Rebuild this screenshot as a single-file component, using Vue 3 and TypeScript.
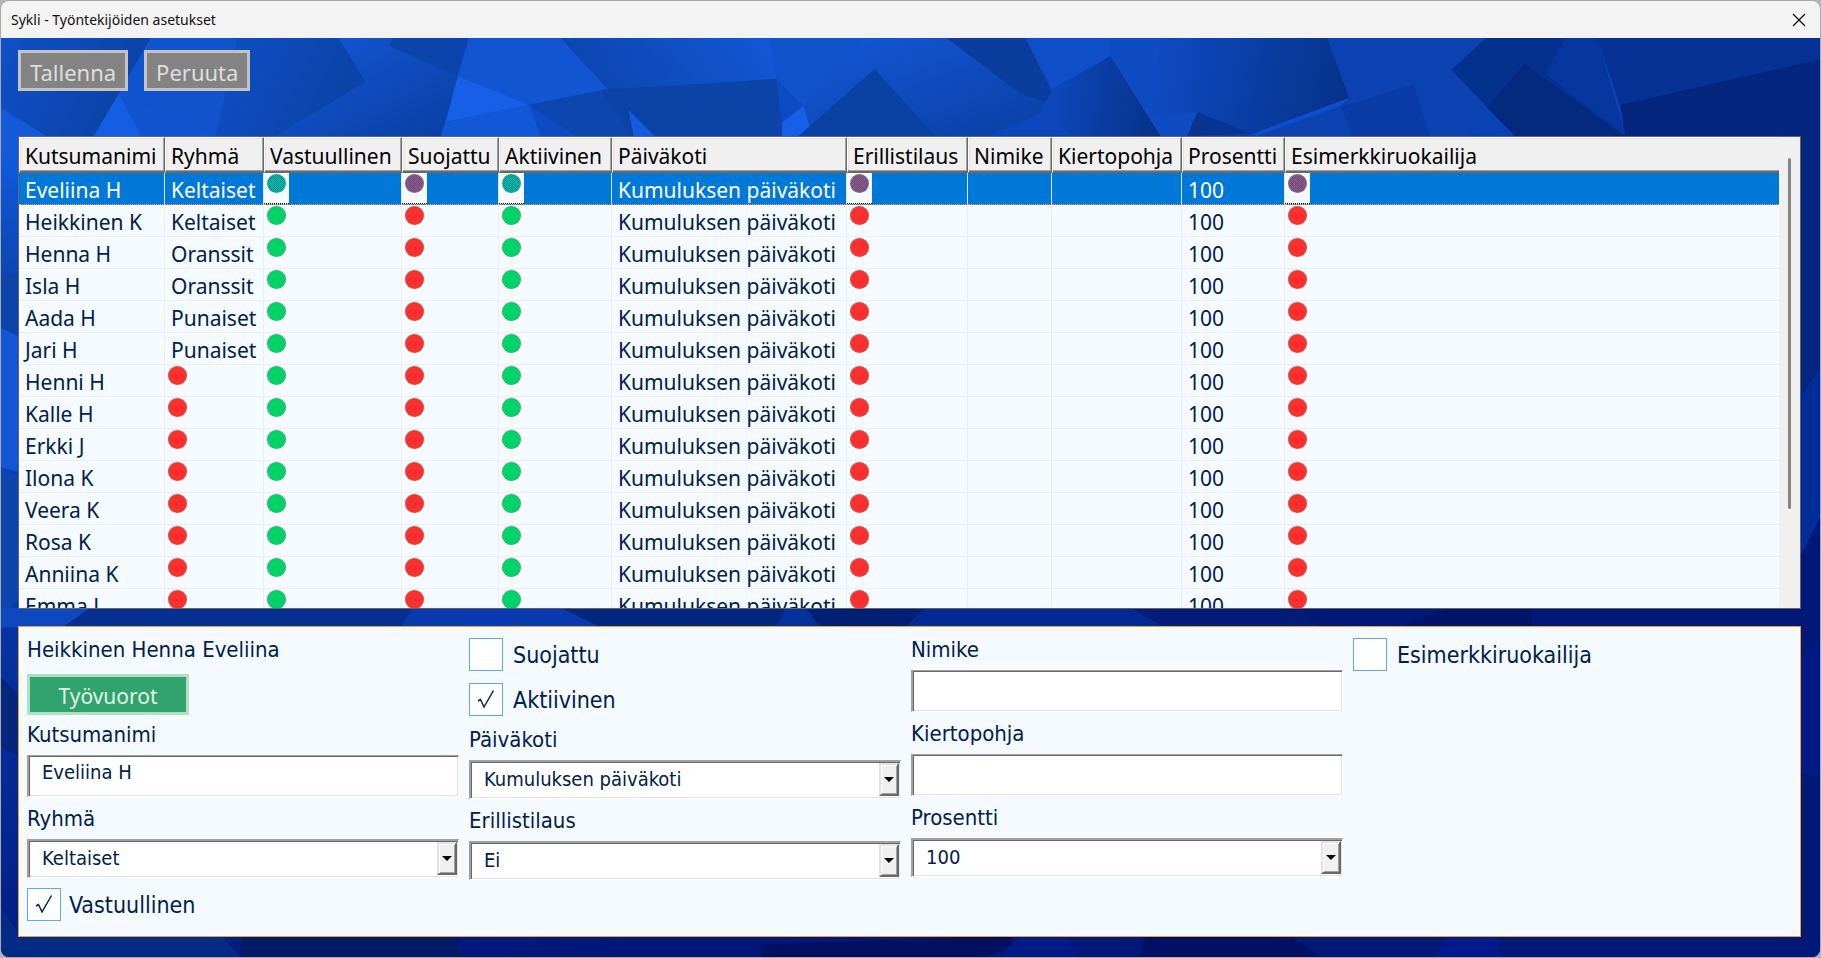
<script setup lang="ts">
import { reactive, ref } from 'vue'

interface Employee {
  name: string
  group: string | null
}

interface Column {
  key: string
  label: string
  width?: number
}

interface Facet {
  points: string
  fill: string
}

const columns: Column[] = [
  { key: 'name', label: 'Kutsumanimi', width: 146 },
  { key: 'group', label: 'Ryhmä', width: 99 },
  { key: 'responsible', label: 'Vastuullinen', width: 138 },
  { key: 'protected', label: 'Suojattu', width: 97 },
  { key: 'active', label: 'Aktiivinen', width: 113 },
  { key: 'daycare', label: 'Päiväkoti', width: 235 },
  { key: 'separate', label: 'Erillistilaus', width: 121 },
  { key: 'title', label: 'Nimike', width: 84 },
  { key: 'rotation', label: 'Kiertopohja', width: 130 },
  { key: 'percent', label: 'Prosentti', width: 103 },
  { key: 'sample', label: 'Esimerkkiruokailija' },
]

const employees: Employee[] = [
  { name: 'Eveliina H', group: 'Keltaiset' },
  { name: 'Heikkinen K', group: 'Keltaiset' },
  { name: 'Henna H', group: 'Oranssit' },
  { name: 'Isla H', group: 'Oranssit' },
  { name: 'Aada H', group: 'Punaiset' },
  { name: 'Jari H', group: 'Punaiset' },
  { name: 'Henni H', group: null },
  { name: 'Kalle H', group: null },
  { name: 'Erkki J', group: null },
  { name: 'Ilona K', group: null },
  { name: 'Veera K', group: null },
  { name: 'Rosa K', group: null },
  { name: 'Anniina K', group: null },
  { name: 'Emma L', group: null },
]

const selected = ref(0)

const form = reactive({
  nickname: 'Eveliina H',
  group: 'Keltaiset',
  responsible: true,
  protected: false,
  active: true,
  daycare: 'Kumuluksen päiväkoti',
  separate: 'Ei',
  title: '',
  rotation: '',
  percent: '100',
  sample: false,
})

function dotColor(key: string, e: Employee): string | null {
  if (key === 'group') return e.group ? null : 'red'
  if (key === 'responsible' || key === 'active') return 'green'
  if (key === 'protected' || key === 'separate' || key === 'sample') return 'red'
  return null
}

function cellText(key: string, e: Employee): string {
  if (key === 'name') return e.name
  if (key === 'group') return e.group ?? ''
  if (key === 'daycare') return 'Kumuluksen päiväkoti'
  if (key === 'percent') return '100'
  return ''
}

/* Facets of the blue backdrop, in a 1820 x 920 space that starts below the title bar */
const facets: Facet[] = [
  { points: '0,0 150,0 93,98 45,98 0,70', fill: 'url(#g-deep)' },
  { points: '0,70 45,98 60,120 0,120', fill: '#145ad8' },
  { points: '150,0 270,0 218,98 93,98', fill: '#1154d0' },
  { points: '118,56 140,98 93,98', fill: '#155de2' },
  { points: '150,50 222,30 216,98 218,98 130,60', fill: '#1153cc' },
  { points: '236,0 338,0 365,44 275,98 215,98', fill: 'url(#g-deep)' },
  { points: '338,0 390,0 388,8 458,38 440,98 275,98 365,44', fill: 'url(#g-fall)' },
  { points: '392,0 468,0 457,38 388,8', fill: '#0b44aa' },
  { points: '468,0 560,0 607,51 526,67 457,38', fill: '#1155d2' },
  { points: '457,38 528,67 445,84', fill: '#165fe6' },
  { points: '445,84 528,67 540,98 440,98', fill: '#1257d8' },
  { points: '528,67 607,51 632,98 575,98', fill: '#0c46ae' },
  { points: '560,0 770,0 776,41 608,52', fill: 'url(#g-rise)' },
  { points: '600,52 776,41 782,98 632,98', fill: '#0b43a6' },
  { points: '628,72 654,98 633,98', fill: '#155be0' },
  { points: '770,0 863,0 863,12 803,68 776,41', fill: '#1053cc' },
  { points: '863,0 946,0 1050,52 1058,67 990,98 935,98 874,31 812,98 803,68', fill: 'url(#g-fall)' },
  { points: '782,84 803,68 812,98 781,98', fill: '#165fe6' },
  { points: '874,31 935,98 798,98', fill: '#0b41a2' },
  { points: '946,0 1025,0 1058,67 1020,56', fill: '#0a3d9e' },
  { points: '1026,0 1110,0 1110,18 1052,51', fill: '#0f50ca' },
  { points: '1110,0 1200,0 1200,76 1187,98 1160,98 1110,18', fill: '#0f4cc4' },
  { points: '1052,51 1110,18 1160,98 1070,98 1040,75', fill: 'url(#g-night)' },
  { points: '1160,0 1327,0 1349,60 1252,96 1197,74 1150,78', fill: 'url(#g-night)' },
  { points: '1197,74 1252,96 1187,98', fill: '#083492' },
  { points: '1327,0 1486,0 1451,32 1487,70 1467,98 1252,98 1349,60', fill: '#0c42b2' },
  { points: '1341,69 1413,46 1430,98 1352,98', fill: '#0b3ba6' },
  { points: '1252,96 1349,60 1340,68 1256,98', fill: '#104fcc' },
  { points: '1486,0 1597,0 1625,98 1515,98 1451,32', fill: '#05318e' },
  { points: '1565,0 1597,0 1625,98 1545,36', fill: '#07369e' },
  { points: '1524,26 1625,98 1515,98 1487,70', fill: '#042a80' },
  { points: '1597,0 1820,0 1820,21 1620,68', fill: '#063296' },
  { points: '1820,21 1620,67 1625,98 1820,98', fill: '#04267e' },
  { points: '0,120 20,120 20,230 0,240', fill: 'url(#g-down)' },
  { points: '0,240 20,232 20,300 0,290', fill: '#0c44aa' },
  { points: '0,290 20,300 20,435 0,430', fill: '#1256d6' },
  { points: '0,430 20,440 20,560 0,580', fill: '#0c45ae' },
  { points: '0,570 90,570 62,590 0,590', fill: '#0d48be' },
  { points: '90,570 412,570 400,590 62,590', fill: '#06308f' },
  { points: '412,570 560,570 600,590 400,590', fill: '#0a3ab0' },
  { points: '560,570 785,570 775,590 600,590', fill: '#03267e' },
  { points: '785,570 805,570 820,590 775,590', fill: '#03319c' },
  { points: '805,570 925,570 905,590 820,590', fill: '#021f76' },
  { points: '925,570 1130,570 1165,590 905,590', fill: '#022a92' },
  { points: '1130,570 1300,570 1320,590 1165,590', fill: '#021c78' },
  { points: '1450,570 1530,570 1532,590 1400,590', fill: '#021468' },
  { points: '0,640 20,660 20,720 0,710', fill: '#04277c' },
  { points: '1800,98 1820,98 1820,330 1800,360', fill: '#04267e' },
  { points: '1800,360 1820,330 1820,480 1800,520', fill: '#022c98' },
  { points: '1800,620 1820,600 1820,740 1800,735', fill: '#001a86' },
  { points: '0,870 20,900 220,898 240,920 0,920', fill: '#032a84' },
  { points: '240,898 455,898 460,920 240,920', fill: '#011a68' },
  { points: '760,908 1010,898 1018,910 980,920 762,920', fill: '#001060' },
  { points: '1018,898 1065,898 1080,920 1000,920', fill: '#001a86' },
  { points: '1145,898 1290,898 1320,920 1140,920', fill: '#001062' },
  { points: '1447,898 1498,898 1500,920 1435,920', fill: '#001a8c' },
]
</script>

<template>
  <div class="window">
    <header class="titlebar">
      <h1 class="title">Sykli - Työntekijöiden asetukset</h1>
      <button class="close" type="button" aria-label="Sulje">
        <svg viewBox="0 0 14 14" width="14" height="14" aria-hidden="true">
          <path d="M1 1 L13 13 M13 1 L1 13" fill="none" stroke="#111" stroke-width="1.3" />
        </svg>
      </button>
    </header>

    <main class="body">
      <svg class="backdrop" viewBox="0 0 1820 920" preserveAspectRatio="none" aria-hidden="true">
        <defs>
          <linearGradient id="g-base" x1="0" y1="0" x2="0.35" y2="1">
            <stop offset="0" stop-color="#1156d6" />
            <stop offset="0.55" stop-color="#0636a4" />
            <stop offset="1" stop-color="#001678" />
          </linearGradient>
          <linearGradient id="g-deep" x1="0" y1="0" x2="1" y2="0.3">
            <stop offset="0" stop-color="#0f4fc6" />
            <stop offset="1" stop-color="#0b43a6" />
          </linearGradient>
          <linearGradient id="g-rise" x1="0" y1="0.4" x2="1" y2="0.2">
            <stop offset="0" stop-color="#0c45ae" />
            <stop offset="1" stop-color="#1257d6" />
          </linearGradient>
          <linearGradient id="g-fall" x1="0" y1="0" x2="1" y2="1">
            <stop offset="0" stop-color="#1358d8" />
            <stop offset="1" stop-color="#0a3fa2" />
          </linearGradient>
          <linearGradient id="g-night" x1="0" y1="0" x2="1" y2="0.1">
            <stop offset="0" stop-color="#0e4bc4" />
            <stop offset="1" stop-color="#07338c" />
          </linearGradient>
          <linearGradient id="g-down" x1="0" y1="0" x2="0" y2="1">
            <stop offset="0" stop-color="#1259de" />
            <stop offset="1" stop-color="#0b45b0" />
          </linearGradient>
        </defs>
        <rect width="1820" height="920" fill="url(#g-base)" />
        <rect x="1000" y="98" width="820" height="822" fill="#001878" />
        <polygon v-for="(f, i) in facets" :key="i" :points="f.points" :fill="f.fill" />
      </svg>

      <div class="toolbar">
        <button class="tool" type="button">Tallenna</button>
        <button class="tool" type="button">Peruuta</button>
      </div>

      <section class="list">
        <div class="scroller">
          <table class="grid">
            <colgroup>
              <col v-for="c in columns" :key="c.key" :style="c.width ? { width: c.width + 'px' } : {}" />
            </colgroup>
            <thead>
              <tr>
                <th v-for="c in columns" :key="c.key" scope="col">{{ c.label }}</th>
              </tr>
            </thead>
            <tbody>
              <tr
                v-for="(e, i) in employees"
                :key="e.name"
                :class="{ selected: i === selected }"
                @click="selected = i"
              >
                <td v-for="c in columns" :key="c.key" :class="{ mark: dotColor(c.key, e) }">
                  <span v-if="dotColor(c.key, e)" class="dot-box">
                    <span class="dot" :class="dotColor(c.key, e)"></span>
                  </span>
                  <template v-else>{{ cellText(c.key, e) }}</template>
                </td>
              </tr>
            </tbody>
          </table>
        </div>
        <div class="track"><div class="thumb"></div></div>
      </section>

      <form class="panel" @submit.prevent>
        <div class="column">
          <p class="fullname">Heikkinen Henna Eveliina</p>
          <button class="shifts" type="button">Työvuorot</button>
          <div class="field">
            <label for="nickname">Kutsumanimi</label>
            <input id="nickname" v-model="form.nickname" class="text" type="text" />
          </div>
          <div class="field">
            <label for="group">Ryhmä</label>
            <div class="combo">
              <select id="group" v-model="form.group">
                <option>Keltaiset</option>
                <option>Oranssit</option>
                <option>Punaiset</option>
              </select>
              <span class="arrow"></span>
            </div>
          </div>
          <label class="check tight">
            <span class="tick-box">
              <input v-model="form.responsible" type="checkbox" />
              <svg v-if="form.responsible" viewBox="0 0 34 33" aria-hidden="true">
                <path d="M9 18 L11.500 16.500 L15 24 L24.500 7.500" />
              </svg>
            </span>
            Vastuullinen
          </label>
        </div>

        <div class="column">
          <label class="check">
            <span class="tick-box">
              <input v-model="form.protected" type="checkbox" />
              <svg v-if="form.protected" viewBox="0 0 34 33" aria-hidden="true">
                <path d="M9 18 L11.500 16.500 L15 24 L24.500 7.500" />
              </svg>
            </span>
            Suojattu
          </label>
          <label class="check">
            <span class="tick-box">
              <input v-model="form.active" type="checkbox" />
              <svg v-if="form.active" viewBox="0 0 34 33" aria-hidden="true">
                <path d="M9 18 L11.500 16.500 L15 24 L24.500 7.500" />
              </svg>
            </span>
            Aktiivinen
          </label>
          <div class="field">
            <label for="daycare">Päiväkoti</label>
            <div class="combo">
              <select id="daycare" v-model="form.daycare">
                <option>Kumuluksen päiväkoti</option>
              </select>
              <span class="arrow"></span>
            </div>
          </div>
          <div class="field">
            <label for="separate">Erillistilaus</label>
            <div class="combo">
              <select id="separate" v-model="form.separate">
                <option>Ei</option>
              </select>
              <span class="arrow"></span>
            </div>
          </div>
        </div>

        <div class="column">
          <div class="field">
            <label for="jobtitle">Nimike</label>
            <input id="jobtitle" v-model="form.title" class="text" type="text" />
          </div>
          <div class="field">
            <label for="rotation">Kiertopohja</label>
            <input id="rotation" v-model="form.rotation" class="text" type="text" />
          </div>
          <div class="field">
            <label for="percent">Prosentti</label>
            <div class="combo">
              <select id="percent" v-model="form.percent">
                <option>100</option>
              </select>
              <span class="arrow"></span>
            </div>
          </div>
        </div>

        <div class="column">
          <label class="check">
            <span class="tick-box">
              <input v-model="form.sample" type="checkbox" />
              <svg v-if="form.sample" viewBox="0 0 34 33" aria-hidden="true">
                <path d="M9 18 L11.500 16.500 L15 24 L24.500 7.500" />
              </svg>
            </span>
            Esimerkkiruokailija
          </label>
        </div>
      </form>
    </main>
  </div>
</template>

<style>
body {
  margin: 0;
  background: #b4b2b2;
}
</style>

<style scoped>
.window {
  box-sizing: border-box;
  display: flex;
  flex-direction: column;
  height: 100vh;
  border: 1px solid #a9a9ab;
  border-radius: 9px;
  overflow: hidden;
  font-family: "Noto Sans", "Open Sans", sans-serif;
  color: #00204d;
}

.titlebar {
  display: flex;
  align-items: center;
  justify-content: space-between;
  height: 37px;
  flex: none;
  padding: 0 14px 0 10px;
  background: #f3f3f3;
}

.title {
  margin: 0;
  font-size: 14px;
  font-weight: 400;
  color: #111;
}

.close {
  display: flex;
  padding: 0;
  border: 0;
  background: none;
}

.body {
  position: relative;
  display: flex;
  flex-direction: column;
  flex: 1;
  min-height: 0;
  padding: 12px 19px 20px 17px;
}

.backdrop {
  position: absolute;
  inset: 0;
  width: 100%;
  height: 100%;
}

.toolbar {
  position: relative;
  display: flex;
  gap: 16px;
  margin-bottom: 45px;
}

.tool {
  box-sizing: border-box;
  height: 41px;
  padding: 2px 9px 0;
  border: 3px solid #c3c3c3;
  background: #838383;
  color: #dedede;
  font: 22px/32px "Noto Sans", sans-serif;
}

.list {
  position: relative;
  display: flex;
  flex: 1;
  min-height: 0;
  border: 1px solid #646464;
  background: #f5faff;
  margin-bottom: 17px;
}

.scroller {
  flex: 1;
  min-width: 0;
  overflow: auto;
  scrollbar-width: none;
}

.track {
  box-sizing: border-box;
  width: 21px;
  padding-top: 21px;
  background: #f0f0f0;
}

.thumb {
  width: 3px;
  height: 78%;
  margin: 0 auto;
  border-radius: 2px;
  background: #858585;
}

.grid {
  width: 100%;
  table-layout: fixed;
  border-collapse: separate;
  border-spacing: 0;
  font-size: 21px;
}

.grid th {
  position: sticky;
  top: 0;
  box-sizing: border-box;
  height: 36px;
  padding: 2px 0 0 5px;
  background: #f0f0f0;
  border-top: 1px solid #fff;
  border-left: 1px solid #fff;
  border-right: 1px solid #696969;
  border-bottom: 2px solid #696969;
  box-shadow: inset -1px -1px #a0a0a0, inset 1px 1px #e3e3e3;
  line-height: 28px;
  font-weight: 400;
  text-align: left;
  white-space: nowrap;
  color: #000;
  z-index: 1;
}

.grid th:last-child {
  border-right: 0;
  box-shadow: inset 0 -1px #a0a0a0, inset 1px 1px #e3e3e3;
}

.grid td {
  box-sizing: border-box;
  height: 32px;
  padding: 3px 0 0 6px;
  border-right: 1px solid #ebeff2;
  border-bottom: 1px solid #ebeff2;
  line-height: 28px;
  white-space: nowrap;
  overflow: hidden;
}

.grid td:last-child {
  border-right: 0;
}

.grid td.mark {
  padding: 0;
  vertical-align: top;
}

.dot-box {
  display: block;
  box-sizing: border-box;
  width: 25px;
  height: 31px;
  padding: 1px 3px;
}

.dot {
  display: block;
  width: 19px;
  height: 19px;
  border-radius: 50%;
  box-shadow: inset 0 0 0 1px #8a8a8a66;
}

.green {
  background-color: #00d469;
}

.red {
  background-color: #fb302d;
}

.selected td {
  background: #0078d7;
  color: #fff;
  border-right-color: #dfe8f0;
  border-bottom: 1px dotted #ff9a3c;
}

.selected .dot-box {
  background: #f5faff;
  border-bottom: 1px dotted #000;
}

.selected .dot {
  background-image: repeating-conic-gradient(#0078d7 0 25%, transparent 0 50%);
  background-size: 2px 2px;
}

.panel {
  position: relative;
  display: grid;
  grid-template-columns: repeat(4, minmax(0, 1fr));
  gap: 10px;
  flex: none;
  padding: 11px 15px 15px 8px;
  border: 1px solid #f0a02c;
  background: #f5faff;
  font-family: "DejaVu Sans Condensed", "DejaVu Sans", sans-serif;
  font-size: 22px;
  line-height: 24px;
}

.column {
  display: flex;
  flex-direction: column;
}

.column > :last-child {
  margin-bottom: 0;
}

.fullname {
  margin: 0 0 12px;
}

.shifts {
  box-sizing: border-box;
  width: 162px;
  height: 41px;
  margin-bottom: 8px;
  padding: 2px 0 0;
  border: 3px solid #b0dfc3;
  background: #31a36c;
  color: #e2f5e9;
  font: 21px/32px "Noto Sans", sans-serif;
}

.field {
  display: flex;
  flex-direction: column;
  gap: 8px;
  margin-bottom: 10px;
}

.text,
.combo select {
  box-sizing: border-box;
  width: 100%;
  margin: 0;
  border: 1px solid;
  border-color: #a0a0a0 #fff #fff #a0a0a0;
  border-left-width: 2px;
  border-radius: 0;
  background: #fff;
  box-shadow: inset 1px 1px #696969, inset -1px -1px #e3e3e3;
  color: #00204d;
  font: 20px/24px "DejaVu Sans Condensed", "DejaVu Sans", sans-serif;
}

.text {
  height: 42px;
  padding: 0 13px 8px;
}

.combo {
  position: relative;
  height: 39px;
}

.combo select {
  display: block;
  height: 39px;
  padding: 0 30px 2px 13px;
  border-top-width: 2px;
  appearance: none;
}

.arrow {
  position: absolute;
  top: 3px;
  right: 2px;
  bottom: 3px;
  box-sizing: border-box;
  display: flex;
  align-items: center;
  justify-content: center;
  width: 20px;
  border: 2px solid;
  border-color: #e3e3e3 #696969 #696969 #e3e3e3;
  background: #f0f0f0;
  box-shadow: inset 1px 1px #fff, inset -1px -1px #a0a0a0;
  pointer-events: none;
}

.arrow::before {
  content: "";
  border: 5px solid transparent;
  border-top-color: #000;
  border-bottom: 0;
}

.check {
  display: flex;
  align-items: center;
  align-self: flex-start;
  gap: 10px;
  margin-bottom: 12px;
  font-size: 23px;
}

.check.tight {
  gap: 8px;
}

.tick-box {
  position: relative;
  width: 34px;
  height: 33px;
}

.tick-box input {
  appearance: none;
  box-sizing: border-box;
  display: block;
  width: 34px;
  height: 33px;
  margin: 0;
  border: 1px solid #58acea;
  background: #fff;
}

.tick-box svg {
  position: absolute;
  inset: 0;
  pointer-events: none;
}

.tick-box path {
  fill: none;
  stroke: #00204d;
  stroke-width: 1.5;
}
</style>
